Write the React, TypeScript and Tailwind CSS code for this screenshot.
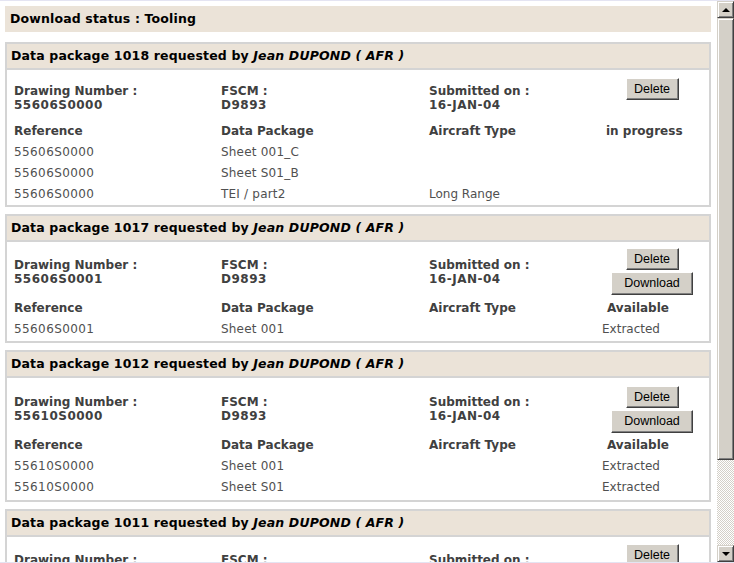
import React from "react";

type Row = { ref: string; pkg: string; ac?: string; st?: string };
type Card = {
  id: string;
  dn: string;
  buttons: ("Delete" | "Download")[];
  secH: number;
  textPt: number;
  btnPt: number;
  status: string;
  statusPl: string;
  rows: Row[];
  pb: string;
};

function Btn({ label }: { label: string }) {
  const w = label === "Delete" ? "w-[53px] h-[22px]" : "w-[82px] h-[23px]";
  return (
    <div
      className={`${w} bg-[#d4d0c8] border border-t-white border-l-white border-r-[#404040] border-b-[#404040] shadow-[inset_-1px_-1px_0_#808080] flex items-center justify-center text-[12.5px] text-black font-['Liberation_Sans',Arial,sans-serif]`}
    >
      {label}
    </div>
  );
}

function CardView({ c }: { c: Card }) {
  return (
    <div className="border-2 border-[#d4d4d4] bg-white">
      <div className="h-[24px] bg-[#ebe3d8] border-b-2 border-[#d4d4d4] box-content pl-[4px] flex items-center font-bold text-[12.5px] tracking-[0.15px] text-black whitespace-nowrap">
        <span>Data package {c.id} requested by&nbsp;</span>
        <span className="italic">Jean DUPOND ( AFR )</span>
      </div>
      <div className={`pl-[7px] pr-[5px] ${c.pb}`}>
        <div
          className="grid grid-cols-[207px_208px_171px_1fr] items-start"
          style={{ height: c.secH }}
        >
          <div className="font-bold text-[#404040] text-[12px] leading-[14px]" style={{ paddingTop: c.textPt }}>
            <div>Drawing Number :</div>
            <div className="tracking-[0.5px]">{c.dn}</div>
          </div>
          <div className="font-bold text-[#404040] text-[12px] leading-[14px]" style={{ paddingTop: c.textPt }}>
            <div>FSCM :</div>
            <div className="tracking-[0.5px]">D9893</div>
          </div>
          <div className="font-bold text-[#404040] text-[12px] leading-[14px]" style={{ paddingTop: c.textPt }}>
            <div>Submitted on :</div>
            <div className="tracking-[0.5px]">16-JAN-04</div>
          </div>
          <div className="flex flex-col items-center gap-[2px]" style={{ paddingTop: c.btnPt }}>
            {c.buttons.map((b) => (
              <Btn key={b} label={b} />
            ))}
          </div>
        </div>
        <div className="grid grid-cols-[207px_208px_171px_1fr] h-[21px] items-center font-bold text-[#404040] text-[12px]">
          <div>Reference</div>
          <div>Data Package</div>
          <div>Aircraft Type</div>
          <div className={c.statusPl}>{c.status}</div>
        </div>
        {c.rows.map((r, i) => (
          <div
            key={i}
            className="grid grid-cols-[207px_208px_171px_1fr] h-[21px] items-center text-[#505050] text-[12px]"
          >
            <div className="tracking-[0.4px]">{r.ref}</div>
            <div className="tracking-[0.2px]">{r.pkg}</div>
            <div>{r.ac ?? ""}</div>
            <div className="pl-[2px]">{r.st ?? ""}</div>
          </div>
        ))}
      </div>
    </div>
  );
}

const cards: Card[] = [
  {
    id: "1018",
    dn: "55606S0000",
    buttons: ["Delete"],
    secH: 50,
    textPt: 14,
    btnPt: 8,
    status: "in progress",
    statusPl: "pl-[6px]",
    rows: [
      { ref: "55606S0000", pkg: "Sheet 001_C" },
      { ref: "55606S0000", pkg: "Sheet S01_B" },
      { ref: "55606S0000", pkg: "TEI / part2", ac: "Long Range" },
    ],
    pb: "pb-[1px]",
  },
  {
    id: "1017",
    dn: "55606S0001",
    buttons: ["Delete", "Download"],
    secH: 55,
    textPt: 16,
    btnPt: 6,
    status: "Available",
    statusPl: "pl-[7px]",
    rows: [{ ref: "55606S0001", pkg: "Sheet 001", st: "Extracted" }],
    pb: "pb-[2px]",
  },
  {
    id: "1012",
    dn: "55610S0000",
    buttons: ["Delete", "Download"],
    secH: 56,
    textPt: 17,
    btnPt: 8,
    status: "Available",
    statusPl: "pl-[7px]",
    rows: [
      { ref: "55610S0000", pkg: "Sheet 001", st: "Extracted" },
      { ref: "55610S0000", pkg: "Sheet S01", st: "Extracted" },
    ],
    pb: "pb-[3px]",
  },
  {
    id: "1011",
    dn: "55610S0001",
    buttons: ["Delete", "Download"],
    secH: 56,
    textPt: 16,
    btnPt: 7,
    status: "Available",
    statusPl: "pl-[7px]",
    rows: [{ ref: "55610S0001", pkg: "Sheet 001", st: "Extracted" }],
    pb: "pb-[2px]",
  },
];

function ScrollBtn({ up }: { up: boolean }) {
  return (
    <div className="h-[17px] w-[17px] bg-[#d4d0c8] border border-t-[#d4d0c8] border-l-[#d4d0c8] border-r-[#404040] border-b-[#404040] shadow-[inset_1px_1px_0_#fff,inset_-1px_-1px_0_#808080] flex items-center justify-center shrink-0">
      {up ? (
        <div className="w-0 h-0 border-x-4 border-x-transparent border-b-4 border-b-black" />
      ) : (
        <div className="w-0 h-0 border-x-4 border-x-transparent border-t-4 border-t-black" />
      )}
    </div>
  );
}

export default function App() {
  return (
    <div className="w-[734px] h-[563px] overflow-hidden bg-white flex flex-col font-['DejaVu_Sans',Verdana,sans-serif]">
      <div className="h-px bg-[#e4e4f2] shrink-0" />
      <div className="flex flex-1 min-h-0">
        <div className="w-[717px] pl-[5px] pr-[6px] pt-[5px] overflow-hidden flex flex-col">
          <div className="h-[26px] shrink-0 bg-[#ebe3d8] pl-[5px] flex items-center font-bold text-[12.5px] tracking-[0.15px] text-black">
            Download status : Tooling
          </div>
          <div className="mt-[10px] flex flex-col gap-[7px]">
            {cards.map((c) => (
              <CardView key={c.id} c={c} />
            ))}
          </div>
        </div>
        <div className="w-[17px] flex flex-col">
          <ScrollBtn up />
          <div className="h-[442px] shrink-0 bg-[#d4d0c8] border border-t-[#d4d0c8] border-l-[#d4d0c8] border-r-[#404040] border-b-[#404040] shadow-[inset_1px_1px_0_#fff,inset_-1px_-1px_0_#808080]" />
          <div className="flex-1 bg-[repeating-conic-gradient(#d4d0c8_0_25%,#ffffff_0_50%)] bg-[length:2px_2px]" />
          <ScrollBtn up={false} />
        </div>
      </div>
      <div className="h-px bg-[#e4e4f2] shrink-0" />
    </div>
  );
}
